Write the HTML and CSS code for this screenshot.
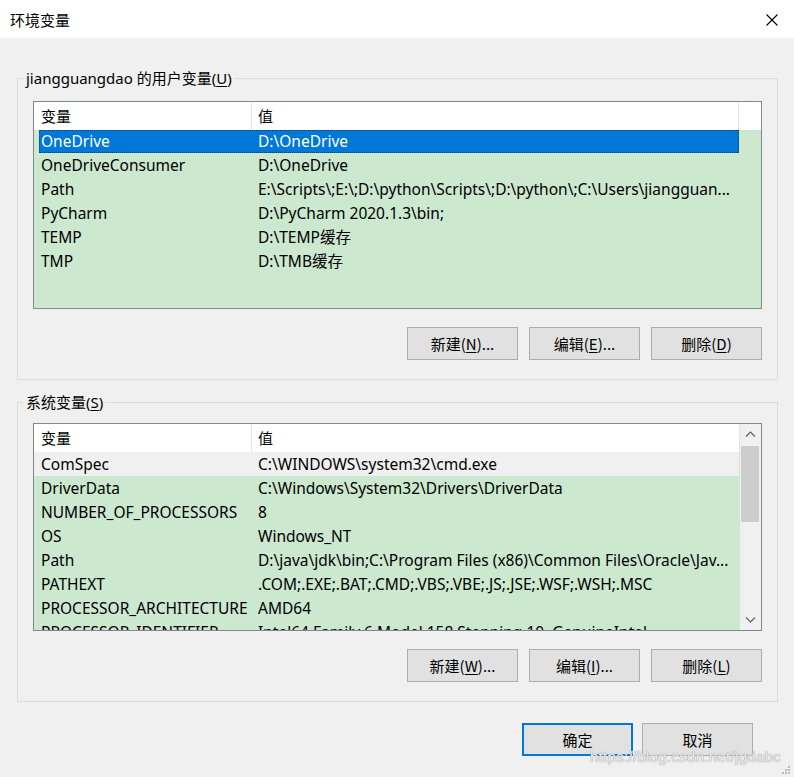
FILE: index.html
```html
<!DOCTYPE html>
<html lang="zh-CN">
<head>
<meta charset="utf-8">
<title>环境变量</title>
<link rel="stylesheet" href="styles.css">
</head>
<body>
<div class="window">
  <div class="titlebar">
    <span class="title">环境变量</span>
    <svg class="close" width="14" height="14" viewBox="0 0 14 14"><path d="M1.5 1.5 L12.5 12.5 M12.5 1.5 L1.5 12.5" stroke="#000" stroke-width="1.1" fill="none"/></svg>
  </div>

  <div class="content">
    <fieldset class="group group-user">
      <legend>jiangguangdao 的用户变量(<u>U</u>)</legend>
      <div class="listbox">
        <div class="list-head">
          <div class="hcell hname">变量</div>
          <div class="hcell hvalue">值</div>
          <div class="hfill"></div>
        </div>
        <div class="rows">
          <div class="row selected"><span class="cname">OneDrive</span><span class="cvalue">D:\OneDrive</span></div>
          <div class="row"><span class="cname">OneDriveConsumer</span><span class="cvalue">D:\OneDrive</span></div>
          <div class="row"><span class="cname">Path</span><span class="cvalue">E:\Scripts\;E:\;D:\python\Scripts\;D:\python\;C:\Users\jiangguan...</span></div>
          <div class="row"><span class="cname">PyCharm</span><span class="cvalue">D:\PyCharm 2020.1.3\bin;</span></div>
          <div class="row"><span class="cname">TEMP</span><span class="cvalue">D:\TEMP缓存</span></div>
          <div class="row"><span class="cname">TMP</span><span class="cvalue">D:\TMB缓存</span></div>
        </div>
      </div>
      <div class="btnrow">
        <button class="btn">新建(<u>N</u>)...</button>
        <button class="btn">编辑(<u>E</u>)...</button>
        <button class="btn">删除(<u>D</u>)</button>
      </div>
    </fieldset>

    <fieldset class="group group-sys">
      <legend>系统变量(<u>S</u>)</legend>
      <div class="listbox scrolling">
        <div class="list-main">
          <div class="list-head">
            <div class="hcell hname">变量</div>
            <div class="hcell hvalue last">值</div>
          </div>
          <div class="rows sys-rows">
            <div class="row hover"><span class="cname">ComSpec</span><span class="cvalue">C:\WINDOWS\system32\cmd.exe</span></div>
            <div class="row"><span class="cname">DriverData</span><span class="cvalue">C:\Windows\System32\Drivers\DriverData</span></div>
            <div class="row"><span class="cname">NUMBER_OF_PROCESSORS</span><span class="cvalue">8</span></div>
            <div class="row"><span class="cname">OS</span><span class="cvalue">Windows_NT</span></div>
            <div class="row"><span class="cname">Path</span><span class="cvalue">D:\java\jdk\bin;C:\Program Files (x86)\Common Files\Oracle\Jav...</span></div>
            <div class="row"><span class="cname">PATHEXT</span><span class="cvalue">.COM;.EXE;.BAT;.CMD;.VBS;.VBE;.JS;.JSE;.WSF;.WSH;.MSC</span></div>
            <div class="row"><span class="cname">PROCESSOR_ARCHITECTURE</span><span class="cvalue">AMD64</span></div>
            <div class="row"><span class="cname">PROCESSOR_IDENTIFIER</span><span class="cvalue">Intel64 Family 6 Model 158 Stepping 10, GenuineIntel</span></div>
          </div>
        </div>
        <div class="vscroll">
          <svg class="arrow" width="21" height="21" viewBox="0 0 21 21"><path d="M6 12.5 L10.5 8 L15 12.5" stroke="#606060" stroke-width="1.2" fill="none"/></svg>
          <div class="track"><div class="thumb"></div></div>
          <svg class="arrow" width="21" height="21" viewBox="0 0 21 21"><path d="M6 8.5 L10.5 13 L15 8.5" stroke="#606060" stroke-width="1.2" fill="none"/></svg>
        </div>
      </div>
      <div class="btnrow">
        <button class="btn">新建(<u>W</u>)...</button>
        <button class="btn">编辑(<u>I</u>)...</button>
        <button class="btn">删除(<u>L</u>)</button>
      </div>
    </fieldset>

    <div class="dialog-actions">
      <button class="btn default">确定</button>
      <button class="btn">取消</button>
    </div>
  </div>

  <div class="watermark">https://blog.csdn.net/jgdabc</div>
  <svg class="grip" width="10" height="10" viewBox="0 0 10 10">
    <rect x="7" y="1" width="2" height="2" fill="#bcbcbc"/>
    <rect x="4" y="4" width="2" height="2" fill="#bcbcbc"/>
    <rect x="7" y="4" width="2" height="2" fill="#bcbcbc"/>
    <rect x="1" y="7" width="2" height="2" fill="#bcbcbc"/>
    <rect x="4" y="7" width="2" height="2" fill="#bcbcbc"/>
    <rect x="7" y="7" width="2" height="2" fill="#bcbcbc"/>
  </svg>
</div>
</body>
</html>
```

FILE: styles.css
```css
* { box-sizing: border-box; }

html, body {
  margin: 0;
  padding: 0;
  background: #f0f0f0;
}

body {
  font-family: "Noto Sans", "Noto Sans CJK SC", sans-serif;
  font-size: 15.5px;
  color: #000;
}

.window {
  position: relative;
  width: 794px;
  height: 777px;
  overflow: hidden;
  background: #f0f0f0;
}

/* title bar */
.titlebar {
  height: 38px;
  background: #fff;
  display: flex;
  align-items: center;
  justify-content: space-between;
  padding: 0 15px 0 10px;
}

.title {
  font-family: "Noto Sans CJK SC", sans-serif;
  font-size: 15px;
  line-height: 20px;
  margin-top: 1px;
}

.close { display: block; margin-top: 1px; }

/* client area */
.content {
  padding: 30px 16px 0 17px;
}

.group {
  margin: 0;
  border: 1px solid #dcdcdc;
  padding: 13px 15px 19px 15px;
  min-width: 0;
}

.group-sys {
  margin-top: 12px;
  padding-top: 11px;
  padding-bottom: 19px;
}

.group legend {
  font-family: "Noto Sans", "Noto Sans CJK SC", sans-serif;
  font-size: 15px;
  line-height: 20px;
  height: 20px;
  padding: 0 2px;
  margin-left: -9px;
}

u { text-decoration-thickness: 1px; text-underline-offset: 2px; }

/* list view */
.listbox {
  height: 208px;
  border: 1px solid #828790;
  background: #cce8cf;
  overflow: hidden;
}

.listbox.scrolling {
  display: flex;
}

.list-main {
  flex: 1;
  min-width: 0;
}

.list-head {
  height: 28px;
  background: #fff;
  display: flex;
}

.hcell {
  height: 28px;
  line-height: 27px;
  font-family: "Noto Sans CJK SC", sans-serif;
  font-size: 15px;
  border-right: 1px solid #e5e5e5;
}

.hname { width: 218px; padding-left: 7px; }
.hvalue { width: 487px; padding-left: 6px; }
.hvalue.last { width: auto; flex: 1; border-right: 1px solid #e5e5e5; }
.hfill { flex: 1; }

.rows {
  padding-left: 5px;
}

.row {
  width: 700px;
  height: 24px;
  line-height: 22px;
  display: flex;
  white-space: nowrap;
}

.sys-rows .row { line-height: 24px; }

.row.selected {
  background: #0078d7;
  color: #fff;
  outline: 1px dotted #1a3a5a;
  outline-offset: -1px;
  height: 23px;
  margin-bottom: 1px;
}

.row.hover {
  background: #f0f0f0;
  margin-left: -5px;
  padding-left: 5px;
  width: 705px;
}

.cname {
  width: 212px;
  padding-left: 2px;
  overflow: hidden;
  flex: none;
}

.cvalue {
  padding-left: 7px;
  overflow: hidden;
}

/* vertical scrollbar */
.vscroll {
  width: 21px;
  flex: none;
  background: #f0f0f0;
  display: flex;
  flex-direction: column;
}

.vscroll .arrow { display: block; flex: none; }

.track {
  flex: 1;
  padding: 1px 2px 0 1px;
}

.thumb {
  height: 76px;
  background: #cdcdcd;
}

/* buttons */
.btnrow {
  display: flex;
  justify-content: flex-end;
  gap: 11px;
  margin-top: 18px;
}

.btn {
  width: 111px;
  height: 33px;
  margin: 0;
  padding: 0;
  background: #e1e1e1;
  border: 1px solid #adadad;
  font-family: "Noto Sans CJK SC", "Noto Sans", sans-serif;
  font-size: 15px;
  color: #000;
}

.btn.default {
  border: 2px solid #0078d7;
}

.dialog-actions {
  display: flex;
  justify-content: flex-end;
  gap: 9px;
  margin-top: 21px;
  padding-right: 25px;
}

/* overlays */
.watermark {
  position: absolute;
  left: 590px;
  top: 748px;
  font-family: "Liberation Sans", sans-serif;
  font-size: 15px;
  color: rgba(255, 255, 255, 0.8);
  text-shadow: 0 0 1px #9a9a9a, 0 0 1px #9a9a9a;
  letter-spacing: 0.3px;
}

.grip {
  position: absolute;
  right: 3px;
  bottom: 2px;
}
```
